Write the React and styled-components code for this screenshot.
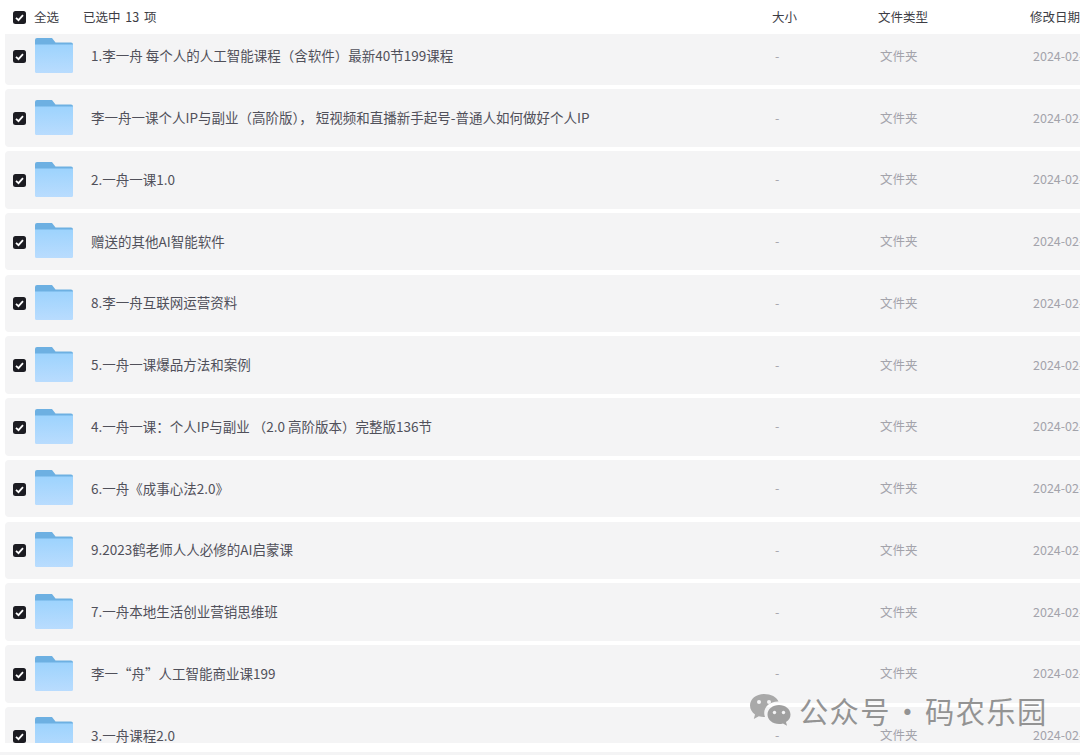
import styled, { createGlobalStyle } from 'styled-components';

const files = [
  '1.李一舟 每个人的人工智能课程（含软件）最新40节199课程',
  '李一舟一课个人IP与副业（高阶版）， 短视频和直播新手起号-普通人如何做好个人IP',
  '2.一舟一课1.0',
  '赠送的其他AI智能软件',
  '8.李一舟互联网运营资料',
  '5.一舟一课爆品方法和案例',
  '4.一舟一课：个人IP与副业 （2.0 高阶版本）完整版136节',
  '6.一舟《成事心法2.0》',
  '9.2023鹤老师人人必修的AI启蒙课',
  '7.一舟本地生活创业营销思维班',
  '李一“舟”人工智能商业课199',
  '3.一舟课程2.0',
];

const GlobalStyle = createGlobalStyle`
  html, body {
    margin: 0;
    height: 755px;
    overflow: hidden;
    background: #fff;
    font-family: "Noto Sans CJK SC", "Noto Sans", sans-serif;
  }
`;

const Page = styled.div`
  position: relative;
  width: 1080px;
  height: 755px;
  overflow: hidden;
`;

const columns = '8px 13px 9px 38px 18px 684px 105px 153px 120px';

const Header = styled.div`
  display: grid;
  grid-template-columns: 13px 8px 49px 689px 106px 152px 80px;
  align-items: center;
  height: 34px;
  padding-left: 13px;
  font-size: 12.5px;
  color: #3d3d45;
  white-space: nowrap;
`;

const Selected = styled.span`
  word-spacing: 2px;
  margin-bottom: 1px;
`;

const HeaderLabel = styled.span`
  grid-column: ${p => p.$col};
  margin-bottom: 1px;
`;

const List = styled.div`
  height: 709px;
  overflow: hidden;
`;

const Rows = styled.div`
  display: flex;
  flex-direction: column;
  gap: 4.25px;
  margin: -6.5px 0 0 5px;
  width: 1200px;
`;

const Row = styled.div`
  display: grid;
  grid-template-columns: ${columns};
  align-items: center;
  height: 57.5px;
  flex: none;
  background: #f4f4f5;
  border-radius: 4px;
`;

const Box = styled.svg`
  display: block;
  width: 13px;
  height: 13px;
  grid-column: ${p => p.$col || 'auto'};
  margin-top: ${p => (p.$col ? '1px' : '0')};
`;

const Folder = styled.svg`
  display: block;
  width: 38px;
  height: 35px;
  grid-column: 4;
  margin-top: -1.5px;
`;

const Name = styled.div`
  grid-column: 6;
  font-size: 13.5px;
  color: #50505a;
  white-space: nowrap;
  margin-bottom: 2px;
`;

const Muted = styled.div`
  grid-column: ${p => p.$col};
  font-size: 12.5px;
  color: #a3a3ab;
  white-space: nowrap;
  margin-bottom: 2px;
`;

const FootStrip = styled.div`
  margin-top: 9px;
  height: 3px;
  background: #f4f4f5;
`;

const Watermark = styled.div`
  position: absolute;
  left: 749px;
  top: 692px;
  display: flex;
  align-items: center;
  gap: 8px;
  font-size: 29.3px;
  line-height: 36px;
  letter-spacing: 1.3px;
  word-spacing: -6px;
  color: rgba(125, 125, 125, 0.82);
  white-space: nowrap;
`;

const WeChat = styled.svg`
  display: block;
  width: 42px;
  height: 36px;
`;

const Check = ({ col }) => (
  <Box $col={col} viewBox="0 0 13 13">
    <rect width="13" height="13" rx="2.5" fill="#1c1c22" />
    <path d="M3 6.800 5.500 9.200 10 4.200" fill="none" stroke="#fff" strokeWidth="1.800" />
  </Box>
);

const FolderIcon = () => (
  <Folder viewBox="0 0 38 35">
    <defs>
      <linearGradient id="folderFront" x1="0" y1="0" x2="0" y2="1">
        <stop offset="0" stopColor="#9dd3fd" />
        <stop offset="1" stopColor="#b9dcfe" />
      </linearGradient>
    </defs>
    <path d="M0 2a2 2 0 0 1 2-2h15l3.500 4.500H36a2 2 0 0 1 2 2V10H0z" fill="#6db0e2" />
    <path d="M0 6.500h38v27a1.500 1.500 0 0 1-1.500 1.500h-35A1.500 1.500 0 0 1 0 33.500z" fill="url(#folderFront)" />
  </Folder>
);

const App = () => (
  <Page>
    <GlobalStyle />
    <Header>
      <Check />
      <HeaderLabel $col={3}>全选</HeaderLabel>
      <Selected>已选中 13 项</Selected>
      <HeaderLabel $col={5}>大小</HeaderLabel>
      <HeaderLabel $col={6}>文件类型</HeaderLabel>
      <HeaderLabel $col={7}>修改日期</HeaderLabel>
    </Header>
    <List>
      <Rows>
        {files.map(name => (
          <Row key={name}>
            <Check col={2} />
            <FolderIcon />
            <Name>{name}</Name>
            <Muted $col={7}>-</Muted>
            <Muted $col={8}>文件夹</Muted>
            <Muted $col={9}>2024-02-20 10:32</Muted>
          </Row>
        ))}
      </Rows>
    </List>
    <FootStrip />
    <Watermark>
      <WeChat viewBox="0 0 42 36">
        <path d="M15 2C7 2 1 7 1 13.500c0 3.700 2 6.800 5 9l-1.200 4.500 5-2.800c1.600.5 3.300.8 5.200.8h1c-.5-1.300-.8-2.600-.8-4 0-6.500 6-11.500 13.500-11.500h.8C27.800 5 22 2 15 2z" fill="#a9a9a9" />
        <path d="M41.500 22.500c0-5.500-5.300-9.500-11.500-9.500s-11.500 4-11.500 9.500S23.800 32 30 32c1.400 0 2.700-.2 4-.6l4 2.400-1-3.800c3-1.900 4.500-4.500 4.500-7.500z" fill="#a0a0a0" />
        <circle cx="10" cy="10" r="2" fill="#f4f4f5" />
        <circle cx="20" cy="10" r="2" fill="#f4f4f5" />
        <circle cx="25.500" cy="20.500" r="1.700" fill="#f4f4f5" />
        <circle cx="34.500" cy="20.500" r="1.700" fill="#f4f4f5" />
      </WeChat>
      <span>公众号 · 码农乐园</span>
    </Watermark>
  </Page>
);

export default App;
